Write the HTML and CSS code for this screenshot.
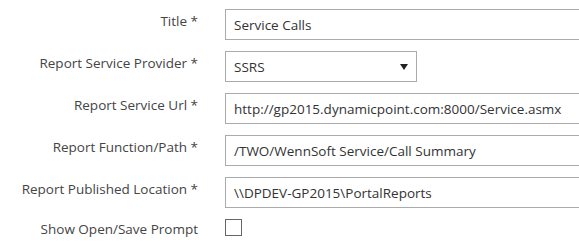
FILE: index.html
```html
<!DOCTYPE html>
<html lang="en">
<head>
  <meta charset="UTF-8" />
  <title>Report Settings</title>
  <link rel="stylesheet" href="styles.css">
</head>
<body>
  <form class="settings">
    <div class="row">
      <label class="label" for="title">Title *</label>
      <input class="field" type="text" id="title" value="Service Calls" />
    </div>
    <div class="row">
      <label class="label" for="provider">Report Service Provider *</label>
      <div class="select" id="provider">
        <span>SSRS</span>
        <svg class="arrow" width="8" height="6" viewBox="0 0 8 6"><path d="M0 0 L8 0 L4 6 Z" fill="#222"/></svg>
      </div>
    </div>
    <div class="row">
      <label class="label" for="url">Report Service Url *</label>
      <input class="field" type="text" id="url" value="http://gp2015.dynamicpoint.com:8000/Service.asmx" />
    </div>
    <div class="row">
      <label class="label" for="path">Report Function/Path *</label>
      <input class="field" type="text" id="path" value="/TWO/WennSoft Service/Call Summary" />
    </div>
    <div class="row">
      <label class="label" for="location">Report Published Location *</label>
      <input class="field" type="text" id="location" value="\\DPDEV-GP2015\PortalReports" />
    </div>
    <div class="row row-check">
      <label class="label" for="prompt">Show Open/Save Prompt</label>
      <input class="check" type="checkbox" id="prompt" />
    </div>
  </form>
</body>
</html>
```

FILE: styles.css
```css
* {
  box-sizing: border-box;
  margin: 0;
  padding: 0;
}

body {
  font-family: "Open Sans", "Noto Sans", sans-serif;
  font-size: 13.5px;
  color: #333;
  background: #fff;
  overflow: hidden;
}

.settings {
  display: flex;
  flex-direction: column;
  gap: 11px;
  padding-top: 9px;
}

.row {
  display: grid;
  grid-template-columns: 198px 1fr;
  column-gap: 27px;
  align-items: start;
}

.label {
  text-align: right;
  line-height: 20px;
  padding-top: 2px;
  color: #444;
}

.row-check .label {
  padding-top: 0;
}

.field {
  height: 31px;
  width: 100%;
  border: 1px solid #ababab;
  border-right: none;
  padding: 0 8px;
  font-family: inherit;
  font-size: 13.5px;
  color: #333;
  outline: none;
}

.select {
  width: 192px;
  height: 31px;
  border: 1px solid #ababab;
  padding: 0 8px;
  display: flex;
  align-items: center;
  justify-content: space-between;
}

.select .arrow {
  margin-right: 0;
}

.check {
  appearance: none;
  width: 17px;
  height: 17px;
  border: 1px solid #666;
  background: #fff;
}
```
